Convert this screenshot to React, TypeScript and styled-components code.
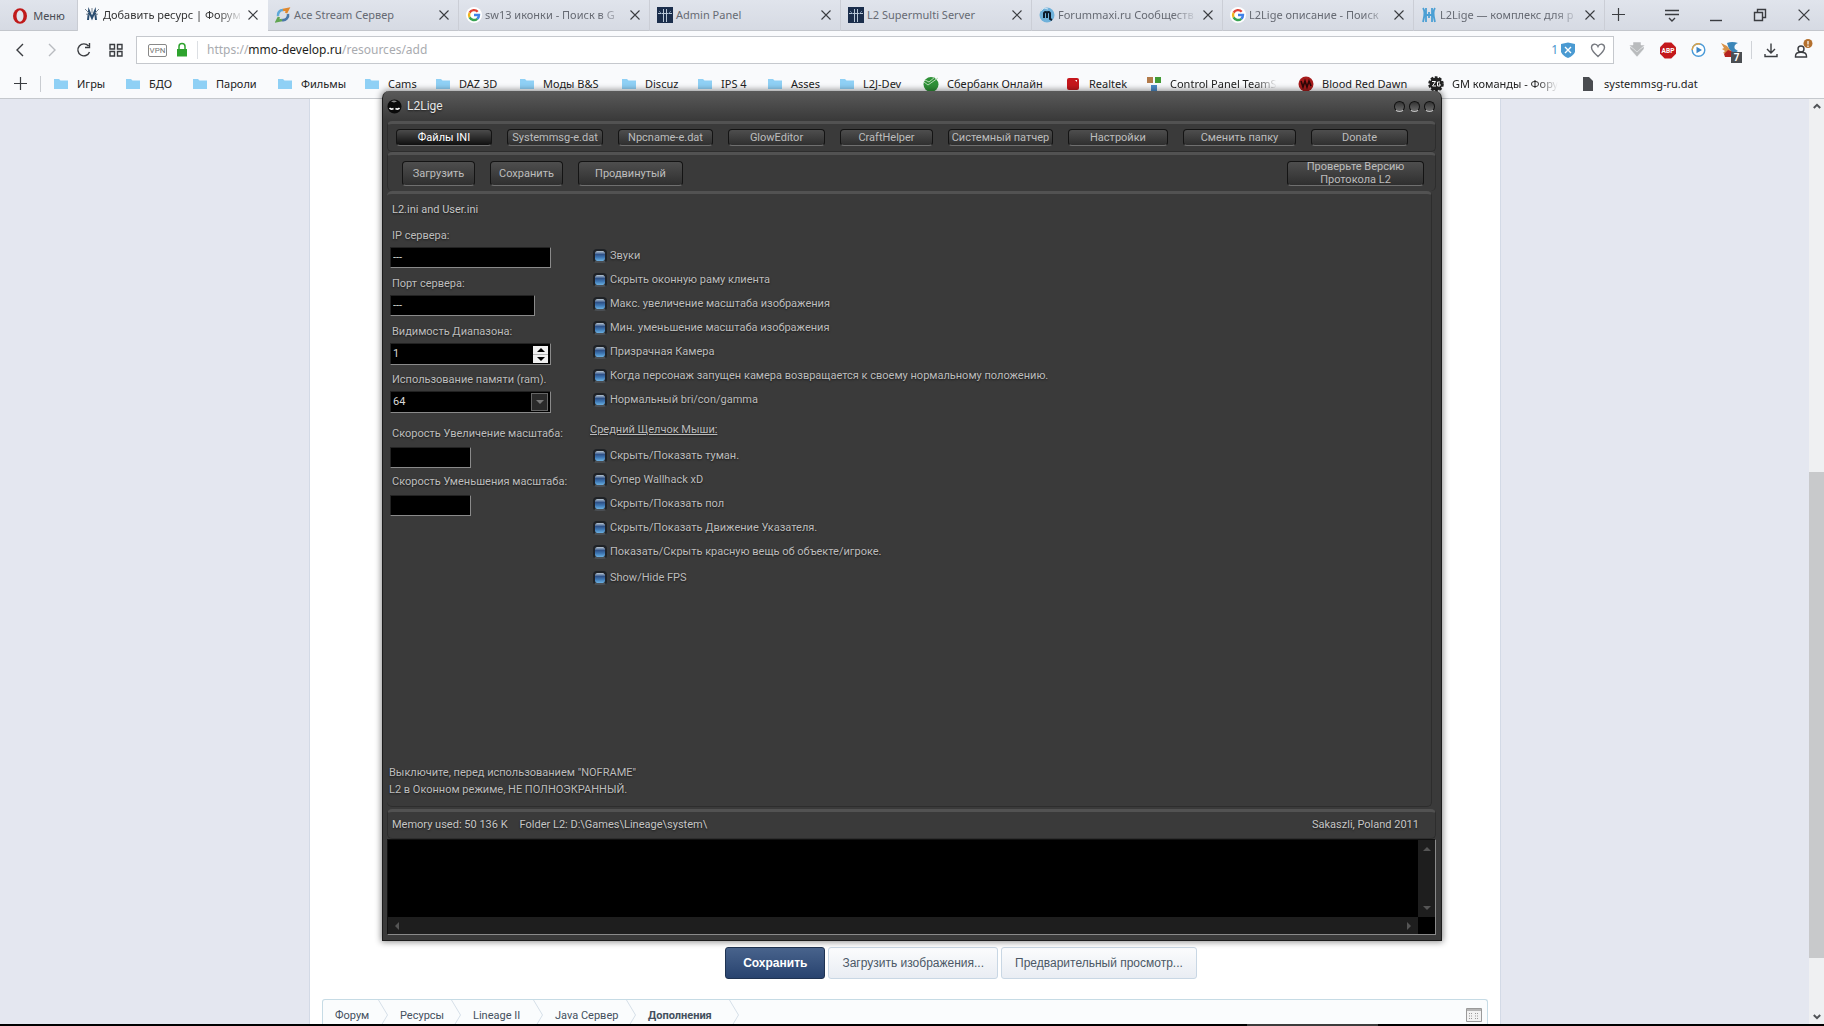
import React from 'react';
import styled, { createGlobalStyle, css } from 'styled-components';

const browserFont = '"Noto Sans", "Open Sans", sans-serif';
const appFont = 'Roboto, "Liberation Sans", sans-serif';
const pageFont = '"Liberation Sans", Arial, sans-serif';

const GlobalStyle = createGlobalStyle`
  * { box-sizing: border-box; }
  body { margin: 0; overflow: hidden; background: #e4e7f0; }
  button, input, select, textarea { font: inherit; color: inherit; margin: 0; }
  a { color: inherit; text-decoration: none; }
`;

/* ---------- browser frame ---------- */

const Screen = styled.div`
  position: relative;
  display: flex;
  flex-direction: column;
  height: 100vh;
  font: 11px/16px ${browserFont};
  color: #222;
`;

const TabStrip = styled.header`
  display: flex;
  flex: none;
  height: 31px;
  background: linear-gradient(#e0e4ec, #d6dae3);
  border-bottom: 1px solid #c3c6cc;
`;

const bareButton = css`
  display: flex;
  align-items: center;
  justify-content: center;
  padding: 0;
  border: 0;
  background: none;
`;

const MenuButton = styled.button`
  ${bareButton}
  width: 77px;
  gap: 5px;
  padding-top: 2px;
  color: #4a4d55;
`;

const TabList = styled.nav`
  display: flex;
  flex: 0 1 1528px;
  min-width: 0;
`;

const Tab = styled.div<{ $active?: boolean }>`
  display: flex;
  align-items: center;
  flex: 1 1 0;
  min-width: 0;
  height: 31px;
  padding: 0 9px 1px 7px;
  color: ${(p) => (p.$active ? '#333' : '#666a73')};
  background: ${(p) => (p.$active ? '#f9fafc' : 'transparent')};
  box-shadow: inset ${(p) => (p.$active ? '1px 0 #c9ccd3' : '-1px 0 #cbced6')};
`;

const TabTitle = styled.a<{ $fade?: boolean }>`
  flex: 1;
  min-width: 0;
  margin: 0 4px 0 3px;
  white-space: nowrap;
  ${(p) => p.$fade && 'mask-image: linear-gradient(90deg, #000 82%, transparent);'}
`;

const IconButton = styled.button<{ $w?: number }>`
  ${bareButton}
  flex: none;
  width: ${(p) => p.$w ?? 16}px;
  height: 28px;
  color: #3a3c40;
`;

const WindowControls = styled.div`
  display: flex;
  justify-content: space-between;
  width: 148px;
  margin-left: auto;
  margin-right: 12px;
  padding-top: 1px;
`;

const Toolbar = styled.div`
  display: flex;
  align-items: center;
  flex: none;
  height: 38px;
  padding: 0 11px 0 8px;
  background: #f9fafc;
`;

const NavGroup = styled.div`
  display: flex;
  gap: 9px;
  width: 128px;
`;

const AddressBar = styled.form`
  display: flex;
  align-items: center;
  flex: 1;
  height: 28px;
  padding: 0 6px 0 11px;
  border: 1px solid #c5c8cd;
  background: #fff;
`;

const VpnBadge = styled.span`
  width: 19px;
  border: 1px solid #888;
  border-radius: 2px;
  font: 8px/11px Roboto, sans-serif;
  text-align: center;
  color: #777;
`;

const AddressDivider = styled.i`
  width: 1px;
  height: 18px;
  margin: 0 9px 0 4px;
  background: #dcdfe3;
`;

const AddressField = styled.label`
  flex: 1;
  display: grid;
  align-items: center;
  font-size: 12px;
  line-height: 18px;

  > * { grid-area: 1 / 1; }
`;

const AddressInput = styled.input`
  width: 100%;
  padding: 0;
  border: 0;
  outline: 0;
  background: none;
  color: transparent;
`;

const AddressText = styled.span`
  color: #a9abaf;
  b { font-weight: 400; color: #1d1e20; }
`;

const Blocked = styled.span`
  display: flex;
  align-items: center;
  gap: 3px;
  margin-right: 14px;
  font-size: 12px;
  color: #4a94cc;
`;

const Extensions = styled.div`
  display: flex;
  align-items: center;
  gap: 15px;
  margin-left: 15px;
`;

const ExtDivider = styled.i`
  width: 1px;
  height: 18px;
  margin-left: -2px;
  margin-right: -4px;
  background: #d0d3d8;
`;

const Badged = styled.span`
  position: relative;
  display: flex;
`;

const CountBadge = styled.span`
  position: absolute;
  left: 10px;
  top: 10px;
  width: 11px;
  background: #4b4e52;
  color: #fff;
  font: 700 10px/11px Roboto, sans-serif;
  text-align: center;
`;

const BookmarkBar = styled.nav`
  display: flex;
  align-items: center;
  flex: none;
  height: 30px;
  padding-left: 12px;
  background: #f9fafc;
  border-bottom: 1px solid #c5c8cd;
`;

const BarDivider = styled.i`
  width: 1px;
  height: 16px;
  margin: 0 12px;
  background: #c9ccd1;
`;

const Bookmark = styled.a<{ $w: number }>`
  display: flex;
  align-items: center;
  flex: none;
  gap: 8px;
  width: ${(p) => p.$w}px;
  white-space: nowrap;
`;

const BookmarkText = styled.span<{ $fade?: boolean }>`
  ${(p) => p.$fade && 'mask-image: linear-gradient(90deg, #000 80%, transparent);'}
`;

/* ---------- web page ---------- */

const Viewport = styled.main`
  display: flex;
  flex: 1;
  min-height: 0;
`;

const PageArea = styled.div`
  flex: 1;
  display: flex;
  padding: 0 308px 0 309px;
  background: #e4e7f0;
`;

const PageBody = styled.div`
  flex: 1;
  display: flex;
  flex-direction: column;
  justify-content: flex-end;
  padding: 0 12px;
  border: solid #d3dae6;
  border-width: 0 1px;
  background: #fff;
`;

const FormActions = styled.div`
  display: flex;
  justify-content: center;
  gap: 3px;
  margin: 0 0 20px;
  padding-left: 112px;
  font: 12px/16px ${pageFont};
`;

const PageButton = styled.button<{ $primary?: boolean }>`
  height: 32px;
  padding: 0 ${(p) => (p.$primary ? 17 : 13)}px;
  border: 1px solid ${(p) => (p.$primary ? '#1f3352' : '#c9d7e4')};
  border-radius: 3px;
  background: ${(p) => (p.$primary ? 'linear-gradient(#48638c, #28436f)' : 'linear-gradient(#fbfcfd, #e9edf3)')};
  color: ${(p) => (p.$primary ? '#fff' : '#4b5866')};
  font-weight: ${(p) => (p.$primary ? 700 : 400)};
`;

const Breadcrumb = styled.nav`
  display: flex;
  flex: none;
  height: 25px;
  padding-right: 5px;
  border: 1px solid #c6dbe5;
  border-bottom: 0;
  border-radius: 3px 3px 0 0;
  background: #fafcfd;
  font: 11px/16px ${appFont};
  color: #44505e;
  overflow: hidden;
`;

const Crumb = styled.a<{ $current?: boolean; $w: number }>`
  display: flex;
  flex: none;
  justify-content: space-between;
  width: ${(p) => p.$w}px;
  padding-left: 12px;
  font-weight: ${(p) => (p.$current ? 700 : 400)};

  span { padding-top: 8px; }
`;

const CrumbIcon = styled.button`
  ${bareButton}
  margin: 8px 0 0 auto;
  height: 14px;
`;

const Scrollbar = styled.div`
  display: flex;
  flex-direction: column;
  align-items: center;
  width: 15px;
  padding: 3px 0;
  background: #eff0f2;
`;

const ScrollThumb = styled.div`
  width: 15px;
  height: 486px;
  margin: auto 0 55px;
  background: #c8c9cb;
`;

const Taskbar = styled.footer`
  display: flex;
  flex: none;
  justify-content: flex-end;
  height: 2px;
  padding-right: 446px;
  background: #000;

  &::after { content: ''; width: 131px; background: #3c3c3c; }
`;

/* ---------- L2Lige window ---------- */

const AppWindow = styled.section`
  position: absolute;
  inset: 91px 382px 85px;
  display: flex;
  flex-direction: column;
  padding: 0 5px 5px 4px;
  border: 1px solid #1c1c1c;
  border-top: 0;
  border-radius: 7px 7px 0 0;
  background: linear-gradient(#5a5a5a, #3a3a3a 29px);
  box-shadow: 0 0 6px 1px rgba(0, 0, 0, 0.45);
  color: #bdbdbd;
  font: 11px/14px ${appFont};
  text-shadow: 0 1px 2px rgba(0, 0, 0, 0.6);
`;

const TitleBar = styled.header`
  display: flex;
  align-items: center;
  flex: none;
  height: 30px;
  padding: 0 1px 0 0;
  gap: 5px;
  color: #e6e6e6;
`;

const AppTitle = styled.h1`
  flex: 1;
  margin: 0;
  font: 12px/16px ${appFont};
`;

const RoundButton = styled.button`
  width: 11px;
  height: 11px;
  margin-left: -1px;
  padding: 0;
  border: 1px solid #101010;
  border-bottom-color: #bdbdbd;
  border-radius: 50%;
  background: linear-gradient(#333, #6a6a6a);
`;

const Panel = styled.div<{ $h?: number }>`
  display: flex;
  align-items: center;
  flex: ${(p) => (p.$h ? 'none' : '1')};
  ${(p) => p.$h && `height: ${p.$h}px;`}
  border: 1px solid #2d2d2d;
  border-top: 3px solid #525252;
  border-radius: 5px;
  background: #3a3a3a;
`;

const MenuPanel = styled(Panel)`
  gap: 15px;
  padding: 0 0 0 8px;
`;

const ActionPanel = styled(Panel)`
  gap: 15px;
  padding: 0 11px 0 14px;
  border-bottom: 0;
`;

const DarkButton = styled.button<{ $w: number; $tall?: boolean; $active?: boolean; $end?: boolean }>`
  display: flex;
  align-items: center;
  justify-content: center;
  flex: 0 1 ${(p) => p.$w}px;
  height: ${(p) => (p.$tall ? 25 : 17)}px;
  padding: 0;
  border: 1px solid #141414;
  border-bottom-color: #6f6f6f;
  border-radius: 4px;
  background: ${(p) => (p.$active ? 'linear-gradient(#4b4b4b, #0f0f0f)' : 'linear-gradient(#4e4e4e, #2f2f2f)')};
  color: ${(p) => (p.$active ? '#fff' : '#bdbdbd')};
  line-height: 13px;
  white-space: nowrap;
  ${(p) => p.$end && 'margin-left: auto; white-space: pre-line;'}
`;

const MainPanel = styled(Panel)`
  align-items: stretch;
  flex-direction: column;
  margin-right: 4px;
  padding: 8px 4px 8px 5px;
  border-left: 0;
`;

const Heading = styled.h2`
  margin: 0 0 9px;
  font: inherit;
  line-height: 16px;
  color: #c6c6c6;
`;

const Columns = styled.div`
  display: flex;
  gap: 38px;
  flex: 1;
`;

const FieldColumn = styled.div`
  display: flex;
  flex-direction: column;
  gap: 5px;
  width: 162px;
  margin-left: -2px;
`;

const Field = styled.div<{ $roomy?: boolean; $spaced?: boolean }>`
  display: flex;
  flex-direction: column;
  align-items: flex-start;
  gap: ${(p) => (p.$roomy ? 2 : 0)}px;
  height: 43px;
  ${(p) => p.$spaced && 'margin-top: 6px;'}
`;

const FieldLabel = styled.label`
  height: 20px;
  padding: 2px 0 0 2px;
  line-height: 14px;
  white-space: nowrap;
`;

const boxLook = css`
  border: 1px solid #222;
  border-right-color: #8a8a8a;
  border-bottom-color: #8a8a8a;
  border-radius: 0;
  background: #000;
  color: #d8d8d8;
  outline: 0;
  text-shadow: none;
`;

const TextInput = styled.input<{ $w: number }>`
  ${boxLook}
  width: ${(p) => p.$w}px;
  height: 21px;
  padding: 0 2px;
`;

const Composite = styled.div`
  ${boxLook}
  display: flex;
  align-items: center;
  width: 161px;
  height: 22px;
  padding-right: 2px;
`;

const NumberInput = styled.input`
  flex: 1;
  min-width: 0;
  padding: 0 2px;
  border: 0;
  outline: 0;
  background: none;
  appearance: textfield;
  &::-webkit-inner-spin-button { appearance: none; margin: 0; }
`;

const Spinner = styled.div`
  display: flex;
  flex-direction: column;
  gap: 1px;
  width: 15px;
  background: #b5b5b5;
`;

const SpinButton = styled.button`
  ${bareButton}
  height: 8px;
  background: #f0f0f0;
  color: #000;
`;

const Select = styled.select`
  flex: 1;
  min-width: 0;
  height: 20px;
  margin-right: -17px;
  padding: 0 19px 0 2px;
  border: 0;
  outline: 0;
  appearance: none;
  background: none;
`;

const DropMark = styled.span`
  display: flex;
  align-items: center;
  justify-content: center;
  width: 17px;
  height: 18px;
  border: 1px solid #666;
  background: #2a2a2a;
  color: #777;
  pointer-events: none;
`;

const CheckColumn = styled.div`
  display: flex;
  flex-direction: column;
  padding-top: 17px;
`;

const CheckRow = styled.label<{ $spaced?: boolean }>`
  display: flex;
  align-items: center;
  gap: 3px;
  height: 24px;
  margin-left: 3px;
  white-space: nowrap;
  ${(p) => p.$spaced && 'margin-top: 2px;'}
`;

const Check = styled.input`
  flex: none;
  width: 14px;
  height: 14px;
  appearance: none;
  border: 2px solid #1f2226;
  border-bottom-color: #4a4e53;
  border-radius: 4px;
  background: linear-gradient(#b9c6d2, #2f5288 35%, #3f78b4 65%, #6cb0e0) padding-box;
`;

const GroupTitle = styled.h3`
  height: 28px;
  margin: 4px 0 0;
  padding-top: 7px;
  font: inherit;
  text-decoration: underline;
`;

const Note = styled.p`
  margin: 0 0 0 -3px;
  line-height: 17px;
`;

const StatusPanel = styled(Panel)`
  justify-content: space-between;
  margin-top: 2px;
  padding: 0 16px 0 4px;
  color: #c6c6c6;
`;

const StatusGroup = styled.div`
  display: flex;
  gap: 12px;
`;

const LogBox = styled.div`
  display: grid;
  flex: none;
  grid-template: 1fr 17px / 1fr 17px;
  height: 96px;
  border: 1px solid #111;
  border-right-color: #8a8a8a;
  border-bottom-color: #8a8a8a;
  background: #000;
`;

const Log = styled.textarea`
  padding: 0;
  border: 0;
  outline: 0;
  resize: none;
  background: #000;
`;

const LogScroll = styled.div<{ $across?: boolean }>`
  display: flex;
  flex-direction: ${(p) => (p.$across ? 'row' : 'column')};
  align-items: center;
  justify-content: space-between;
  padding: ${(p) => (p.$across ? '0 5px' : '5px 0')};
  background: #1e1e1e;
  color: #555;
`;

/* ---------- drawings ---------- */

const Cross = ({ size = 10 }: { size?: number }) => (
  <svg width={size} height={size} viewBox="0 0 10 10" fill="none" stroke="currentColor" strokeWidth="1.1">
    <path d="M.5.5l9 9M9.5.5l-9 9" />
  </svg>
);

const Triangle = ({ dir, size = 8 }: { dir: 'up' | 'down' | 'left' | 'right'; size?: number }) => {
  const d = { up: 'M0 6l4-4 4 4z', down: 'M0 2l4 4 4-4z', left: 'M6 0L2 4l4 4z', right: 'M2 0l4 4-4 4z' }[dir];
  return <svg width={size} height={size} viewBox="0 0 8 8" fill="currentColor"><path d={d} /></svg>;
};

const Chevron = ({ up }: { up?: boolean }) => (
  <svg width="8" height="8" viewBox="0 0 8 8" fill="none" stroke="#505357" strokeWidth="2">
    <path d={up ? 'M.8 6L4 2.8 7.200 6' : 'M.8 2L4 5.200 7.200 2'} />
  </svg>
);

const Plus = () => (
  <svg width="13" height="13" viewBox="0 0 13 13" stroke="#3a3c40" strokeWidth="1.200"><path d="M6.500 0v13M0 6.500h13" /></svg>
);

const OperaLogo = () => (
  <svg width="16" height="16" viewBox="0 0 16 16">
    <ellipse cx="8" cy="8" rx="7" ry="7.800" fill="#c01a1a" />
    <ellipse cx="8" cy="8" rx="3.500" ry="5.800" fill="#e0e4ec" />
  </svg>
);

type Glyph = 'm' | 'ace' | 'google' | 'admin' | 'forum' | 'l2' | 'folder' | 'sber' | 'realtek' | 'panel' | 'blood' | 'gear' | 'file';

const Favicon = ({ kind }: { kind: Glyph }) => {
  const shapes: Record<Glyph, React.ReactNode> = {
    m: (
      <g fill="none">
        <path d="M4 13l1-9 3 7 3-7 1 9" stroke="#2b4d70" strokeWidth="2" />
        <path d="M1 2l4 4M15 2l-4 4M8 1v5M2 7l3 1M14 7l-3 1" stroke="#7c8894" />
      </g>
    ),
    ace: (
      <g fill="none" strokeWidth="2.600">
        <path d="M3 9a5 5 0 0 1 5-6" stroke="#5ea8d8" /><path d="M8 3l5-1-2 4" stroke="#e0882d" />
        <path d="M13 7a5 5 0 0 1-6 6" stroke="#4a78a8" /><path d="M7 13l-5 1 2-4" stroke="#62a552" />
      </g>
    ),
    google: (
      <g>
        <circle cx="8" cy="8" r="8" fill="#fff" />
        <g fill="none" strokeWidth="2.400">
          <path d="M11.700 4.800A5 5 0 0 0 3.600 5.700" stroke="#e04436" /><path d="M3.600 5.700a5 5 0 0 0 0 4.700" stroke="#f0b51c" />
          <path d="M3.600 10.400a5 5 0 0 0 7.700 1.400" stroke="#38a352" /><path d="M11.300 11.800A5 5 0 0 0 13 8H8" stroke="#4081e8" />
        </g>
      </g>
    ),
    admin: (
      <g>
        <path d="M0 0h16v16H0z" fill="#1b2e4c" />
        <path d="M1 6.500h14M6.500 2v13M9.500 2v13" stroke="#b9c8d8" /><path d="M2 4l3 3M14 4l-3 3" stroke="#6f87a4" />
      </g>
    ),
    forum: (
      <g>
        <circle cx="8" cy="8" r="7.500" fill="#6fb1da" /><path d="M2 4l3-3 4 1" stroke="#cfe6f4" fill="none" />
        <path d="M5 11V6q1.500-2 3 0v5M8 6q1.500-2 3 0v6l2 1" stroke="#0d1c2c" strokeWidth="2" fill="none" />
      </g>
    ),
    l2: <path d="M2 1c3 4 1 10 0 14M5 1v14M8 5v6M11 1v14M14 1c-3 4-1 10 0 14M5 8h6" stroke="#4a9fd4" strokeWidth="1.800" fill="none" />,
    folder: <path d="M1 3h5l1.500 1.500H15V13H1z" fill="#8fd0f5" />,
    sber: <g><circle cx="8" cy="8.500" r="7.500" fill="#2f9138" /><path d="M1 6l4 3 10-7M2 4l4 2 6-5" stroke="#b7dcb6" fill="none" /></g>,
    realtek: <g><rect x="2" y="2" width="12" height="12" rx="2" fill="#c5161c" /><path d="M10 4h2v2z" fill="#fff" /></g>,
    panel: <g><path d="M1 1h6v6H1z" fill="#b27a4a" /><path d="M9 1h6v6H9z" fill="#429a35" /><path d="M5 9h6v6H5z" fill="#4b8bc9" /></g>,
    blood: <g><circle cx="8" cy="8" r="7.500" fill="#a61b1b" /><path d="M3 5l2 6 2-6 2 6 2-6 2 5" stroke="#2c0707" strokeWidth="1.600" fill="none" /></g>,
    gear: (
      <g>
        <circle cx="8" cy="8" r="6.500" fill="#222" stroke="#222" strokeWidth="2.600" strokeDasharray="2.600 1.500" />
        <path d="M4 5.500h3.500L4.500 10H8M12 6H9.500v4H12V8h-1" stroke="#fff" fill="none" />
      </g>
    ),
    file: <path d="M3 1h6l4 4v10H3z" fill="#4a4c50" />,
  };
  return <svg width="16" height="16" viewBox="0 0 16 16">{shapes[kind]}</svg>;
};

const NavIcon = ({ d, color = '#3a3c40', w = 16 }: { d: string; color?: string; w?: number }) => (
  <svg width={w} height="16" viewBox={`0 0 ${w} 16`} fill="none" stroke={color} strokeWidth="1.400"><path d={d} /></svg>
);

const Arrow = () => (
  <svg width="10" height="30" viewBox="0 0 10 30" fill="none" stroke="#d5dfe8"><path d="M.5 0l9 15-9 15" /></svg>
);

/* ---------- data ---------- */

const tabs: { icon: Glyph; title: string; fade?: boolean }[] = [
  { icon: 'm', title: 'Добавить ресурс | Форум', fade: true },
  { icon: 'ace', title: 'Ace Stream Сервер' },
  { icon: 'google', title: 'sw13 иконки - Поиск в G', fade: true },
  { icon: 'admin', title: 'Admin Panel' },
  { icon: 'admin', title: 'L2 Supermulti Server' },
  { icon: 'forum', title: 'Forummaxi.ru Сообществ', fade: true },
  { icon: 'google', title: 'L2Lige описание - Поиск', fade: true },
  { icon: 'l2', title: 'L2Lige — комплекс для р', fade: true },
];

const bookmarks: { icon: Glyph; text: string; w: number; fade?: boolean }[] = [
  { icon: 'folder', text: 'Игры', w: 72 },
  { icon: 'folder', text: 'БДО', w: 67 },
  { icon: 'folder', text: 'Пароли', w: 85 },
  { icon: 'folder', text: 'Фильмы', w: 87 },
  { icon: 'folder', text: 'Cams', w: 71 },
  { icon: 'folder', text: 'DAZ 3D', w: 84 },
  { icon: 'folder', text: 'Моды B&S', w: 102 },
  { icon: 'folder', text: 'Discuz', w: 76 },
  { icon: 'folder', text: 'IPS 4', w: 70 },
  { icon: 'folder', text: 'Asses', w: 72 },
  { icon: 'folder', text: 'L2J-Dev', w: 84 },
  { icon: 'sber', text: 'Сбербанк Онлайн', w: 142 },
  { icon: 'realtek', text: 'Realtek', w: 81 },
  { icon: 'panel', text: 'Control Panel TeamS', w: 152, fade: true },
  { icon: 'blood', text: 'Blood Red Dawn', w: 130 },
  { icon: 'gear', text: 'GM команды - Фору', w: 152, fade: true },
  { icon: 'file', text: 'systemmsg-ru.dat', w: 130 },
];

const sections: [string, number][] = [
  ['Файлы INI', 96], ['Systemmsg-e.dat', 96], ['Npcname-e.dat', 95], ['GlowEditor', 97], ['CraftHelper', 93],
  ['Системный патчер', 105], ['Настройки', 100], ['Сменить папку', 113], ['Donate', 97],
];

const clientOptions = [
  'Звуки', 'Скрыть оконную раму клиента', 'Макс. увеличение масштаба изображения', 'Мин. уменьшение масштаба изображения',
  'Призрачная Камера', 'Когда персонаж запущен камера возвращается к своему нормальному положению.', 'Нормальный bri/con/gamma',
];

const mouseOptions = [
  'Скрыть/Показать туман.', 'Супер Wallhack xD', 'Скрыть/Показать пол', 'Скрыть/Показать Движение Указателя.',
  'Показать/Скрыть красную вещь об объекте/игроке.', 'Show/Hide FPS',
];

const crumbs: [string, number][] = [['Форум', 65], ['Ресурсы', 73], ['Lineage II', 82], ['Java Сервер', 93], ['Дополнения', 103]];

/* ---------- parts ---------- */

const BrowserFrame = () => (
  <>
    <TabStrip>
      <MenuButton><OperaLogo />Меню</MenuButton>
      <TabList>
        {tabs.map((t, i) => (
          <Tab key={t.title} $active={i === 0}>
            <Favicon kind={t.icon} />
            <TabTitle href="#" $fade={t.fade}>{t.title}</TabTitle>
            <IconButton $w={12} aria-label="Закрыть вкладку"><Cross /></IconButton>
          </Tab>
        ))}
      </TabList>
      <IconButton $w={26} aria-label="Новая вкладка"><Plus /></IconButton>
      <WindowControls>
        <IconButton aria-label="Список вкладок"><NavIcon d="M1 3.500h14M1 7.500h14M5 11l3 3 3-3" /></IconButton>
        <IconButton aria-label="Свернуть"><NavIcon d="M2 13.500h12" /></IconButton>
        <IconButton aria-label="Восстановить"><NavIcon d="M2.500 5.500h8v8h-8zM5.500 5V2.500h8v8H11" /></IconButton>
        <IconButton aria-label="Закрыть"><Cross size={12} /></IconButton>
      </WindowControls>
    </TabStrip>
    <Toolbar>
      <NavGroup>
        <IconButton $w={23} aria-label="Назад"><NavIcon d="M11 2L5 8l6 6" /></IconButton>
        <IconButton $w={23} aria-label="Вперёд"><NavIcon d="M5 2l6 6-6 6" color="#b8bbc0" /></IconButton>
        <IconButton $w={23} aria-label="Обновить"><NavIcon d="M13.500 10A6 6 0 1 1 12.500 4M13.500 1v4.500H9" /></IconButton>
        <IconButton $w={23} aria-label="Экспресс-панель"><NavIcon d="M2 2.500h4.500v4.500H2zM9.500 2.500H14v4.500H9.500zM2 9.500h4.500V14H2zM9.500 9.500H14V14H9.500z" /></IconButton>
      </NavGroup>
      <AddressBar>
        <VpnBadge>VPN</VpnBadge>
        <svg width="26" height="16" viewBox="0 0 26 16">
          <path d="M12 8V4.500a3 3 0 0 1 6 0V8" fill="none" stroke="#2ea32e" strokeWidth="1.500" /><path d="M10 7h10v7.500H10z" fill="#2ea32e" />
        </svg>
        <AddressDivider />
        <AddressField>
          <AddressText>https://<b>mmo-develop.ru</b>/resources/add</AddressText>
          <AddressInput aria-label="Адрес" defaultValue="" />
        </AddressField>
        <Blocked>
          1
          <svg width="14" height="16" viewBox="0 0 14 16">
            <path d="M0 2l7-1.500L14 2v8q-2 4-7 6-5-2-7-6z" fill="#4a9ad2" /><path d="M4 5l6 6M10 5l-6 6" stroke="#fff" strokeWidth="1.400" />
          </svg>
        </Blocked>
        <IconButton type="button" $w={18} aria-label="В избранное">
          <NavIcon d="M8 14.500C4 11 1.500 8.500 1.500 5.500 1.500 1.500 6.500 1 8 4.500 9.500 1 14.500 1.500 14.500 5.500c0 3-2.500 5.500-6.500 9z" color="#777a80" />
        </IconButton>
      </AddressBar>
      <Extensions>
        <svg width="16" height="16" viewBox="0 0 16 16" fill="#b9bbbd" stroke="#f9fafc" strokeWidth=".5">
          <path d="M1 7l7 8 7-8V4l-7 5-7-5z" /><path d="M4 0h8v3h4l-8 7-8-7h4z" />
        </svg>
        <svg width="16" height="17" viewBox="0 0 17 17">
          <path d="M5 0h7l5 5v7l-5 5H5l-5-5V5z" fill="#c4181c" />
          <text x="8.500" y="11" fill="#fff" fontFamily="Roboto, sans-serif" fontWeight="700" fontSize="7" textAnchor="middle">ABP</text>
        </svg>
        <svg width="15" height="16" viewBox="0 0 15 16">
          <circle cx="7.500" cy="8" r="6.300" fill="#fff" stroke="#4a9ad8" strokeWidth="1.400" />
          <path d="M1.200 8a6.300 6.300 0 0 1 8-6" fill="none" stroke="#e0a445" strokeWidth="1.400" /><path d="M5.500 4.800L11 8l-5.500 3.200z" fill="#3a86c8" />
        </svg>
        <Badged>
          <svg width="17" height="16" viewBox="0 0 17 16">
            <path d="M6 1q5-2 11 0-5 2-3 6l3 2-5 3-4-5z" fill="#3b86b8" /><path d="M0 1l6 3 4 5-3 4-5-2 2-2-3-2 2-1z" fill="#d99248" /><path d="M3 12l4-4 5 2-2 5H4z" fill="#b5231f" />
          </svg>
          <CountBadge>7</CountBadge>
        </Badged>
        <ExtDivider />
        <NavIcon d="M8 1.500v9M4 7l4 4 4-4M2 12v2.500h12V12" />
        <svg width="19" height="22" viewBox="0 0 19 22">
          <circle cx="7" cy="10" r="3" fill="none" stroke="#3a3c40" strokeWidth="1.400" />
          <path d="M1.500 17c0-5 11-5 11 0v1h-11z" fill="none" stroke="#3a3c40" strokeWidth="1.400" />
          <circle cx="14" cy="4.500" r="4.500" fill="#b4702e" /><path d="M14 2v3.500M14 6.500V8" stroke="#fff" strokeWidth="1.200" />
        </svg>
      </Extensions>
    </Toolbar>
    <BookmarkBar>
      <IconButton aria-label="Добавить закладку"><Plus /></IconButton>
      <BarDivider />
      {bookmarks.map((b) => (
        <Bookmark key={b.text} href="#" $w={b.w}>
          <Favicon kind={b.icon} />
          <BookmarkText $fade={b.fade}>{b.text}</BookmarkText>
        </Bookmark>
      ))}
    </BookmarkBar>
  </>
);

const WebPage = () => (
  <Viewport>
    <PageArea>
      <PageBody>
        <FormActions>
          <PageButton $primary>Сохранить</PageButton>
          <PageButton>Загрузить изображения...</PageButton>
          <PageButton>Предварительный просмотр...</PageButton>
        </FormActions>
        <Breadcrumb>
          {crumbs.map(([text, w], i) => (
            <Crumb key={text} href="#" $w={w} $current={i === crumbs.length - 1}>
              <span>{text}</span>
              <Arrow />
            </Crumb>
          ))}
          <CrumbIcon aria-label="Быстрая навигация">
            <svg width="16" height="14" viewBox="0 0 16 14">
              <path d="M.5.5h15v13H.5z" fill="#f2f2f2" stroke="#9a9a9a" /><path d="M1 2h14" stroke="#b5b5b5" strokeWidth="2" />
              <path d="M3 5.500h4M9 5.500h4M3 8h4M9 8h4M3 10.500h4M9 10.500h4" stroke="#999" strokeDasharray="1 1" />
            </svg>
          </CrumbIcon>
        </Breadcrumb>
      </PageBody>
    </PageArea>
    <Scrollbar>
      <Chevron up />
      <ScrollThumb />
      <Chevron />
    </Scrollbar>
  </Viewport>
);

const Options = ({ items }: { items: string[] }) => (
  <>
    {items.map((text) => (
      <CheckRow key={text} $spaced={text === 'Show/Hide FPS'}>
        <Check type="checkbox" />
        {text}
      </CheckRow>
    ))}
  </>
);

const LigeWindow = () => (
  <AppWindow>
    <TitleBar>
      <svg width="15" height="15" viewBox="0 0 15 15">
        <circle cx="7.500" cy="7.500" r="7" fill="#0a0a0a" /><path d="M4 2.500q3-2 6 0l-3 1z" fill="#888" />
        <path d="M2.500 9q1.500 2 4 .5M8.500 9.500q2.500 1.500 4-.5" stroke="#fff" strokeWidth="1.500" fill="none" />
      </svg>
      <AppTitle>L2Lige</AppTitle>
      <RoundButton aria-label="Свернуть" />
      <RoundButton aria-label="Развернуть" />
      <RoundButton aria-label="Закрыть" />
    </TitleBar>
    <MenuPanel $h={31}>
      {sections.map(([text, w], i) => (
        <DarkButton key={text} $w={w} $active={i === 0}>{text}</DarkButton>
      ))}
    </MenuPanel>
    <ActionPanel $h={39}>
      <DarkButton $tall $w={73}>Загрузить</DarkButton>
      <DarkButton $tall $w={73}>Сохранить</DarkButton>
      <DarkButton $tall $w={105}>Продвинутый</DarkButton>
      <DarkButton $tall $end $w={137}>{'Проверьте Версию\nПротокола L2'}</DarkButton>
    </ActionPanel>
    <MainPanel>
      <Heading>L2.ini and User.ini</Heading>
      <Columns>
        <FieldColumn>
          <Field>
            <FieldLabel htmlFor="ip">IP сервера:</FieldLabel>
            <TextInput id="ip" $w={161} defaultValue="---" />
          </Field>
          <Field>
            <FieldLabel htmlFor="port">Порт сервера:</FieldLabel>
            <TextInput id="port" $w={145} defaultValue="---" />
          </Field>
          <Field>
            <FieldLabel htmlFor="range">Видимость Диапазона:</FieldLabel>
            <Composite>
              <NumberInput id="range" type="number" defaultValue={1} />
              <Spinner>
                <SpinButton aria-label="Больше"><Triangle dir="up" /></SpinButton>
                <SpinButton aria-label="Меньше"><Triangle dir="down" /></SpinButton>
              </Spinner>
            </Composite>
          </Field>
          <Field>
            <FieldLabel htmlFor="ram">Использование памяти (ram).</FieldLabel>
            <Composite>
              <Select id="ram" defaultValue="64"><option>64</option></Select>
              <DropMark><Triangle dir="down" /></DropMark>
            </Composite>
          </Field>
          <Field $roomy $spaced>
            <FieldLabel htmlFor="zoomin">Скорость Увеличение масштаба:</FieldLabel>
            <TextInput id="zoomin" $w={81} />
          </Field>
          <Field $roomy>
            <FieldLabel htmlFor="zoomout">Скорость Уменьшения масштаба:</FieldLabel>
            <TextInput id="zoomout" $w={81} />
          </Field>
        </FieldColumn>
        <CheckColumn>
          <Options items={clientOptions} />
          <GroupTitle>Средний Щелчок Мыши:</GroupTitle>
          <Options items={mouseOptions} />
        </CheckColumn>
      </Columns>
      <Note>Выключите, перед использованием "NOFRAME"</Note>
      <Note>L2 в Оконном режиме, НЕ ПОЛНОЭКРАННЫЙ.</Note>
    </MainPanel>
    <StatusPanel $h={30}>
      <StatusGroup>
        <span>Memory used: 50 136 K</span>
        <span>Folder L2: D:\Games\Lineage\system\</span>
      </StatusGroup>
      <span>Sakaszli, Poland 2011</span>
    </StatusPanel>
    <LogBox>
      <Log aria-label="Журнал" readOnly />
      <LogScroll><Triangle dir="up" /><Triangle dir="down" /></LogScroll>
      <LogScroll $across><Triangle dir="left" /><Triangle dir="right" /></LogScroll>
    </LogBox>
  </AppWindow>
);

export default function App() {
  return (
    <Screen>
      <GlobalStyle />
      <BrowserFrame />
      <WebPage />
      <Taskbar />
      <LigeWindow />
    </Screen>
  );
}
